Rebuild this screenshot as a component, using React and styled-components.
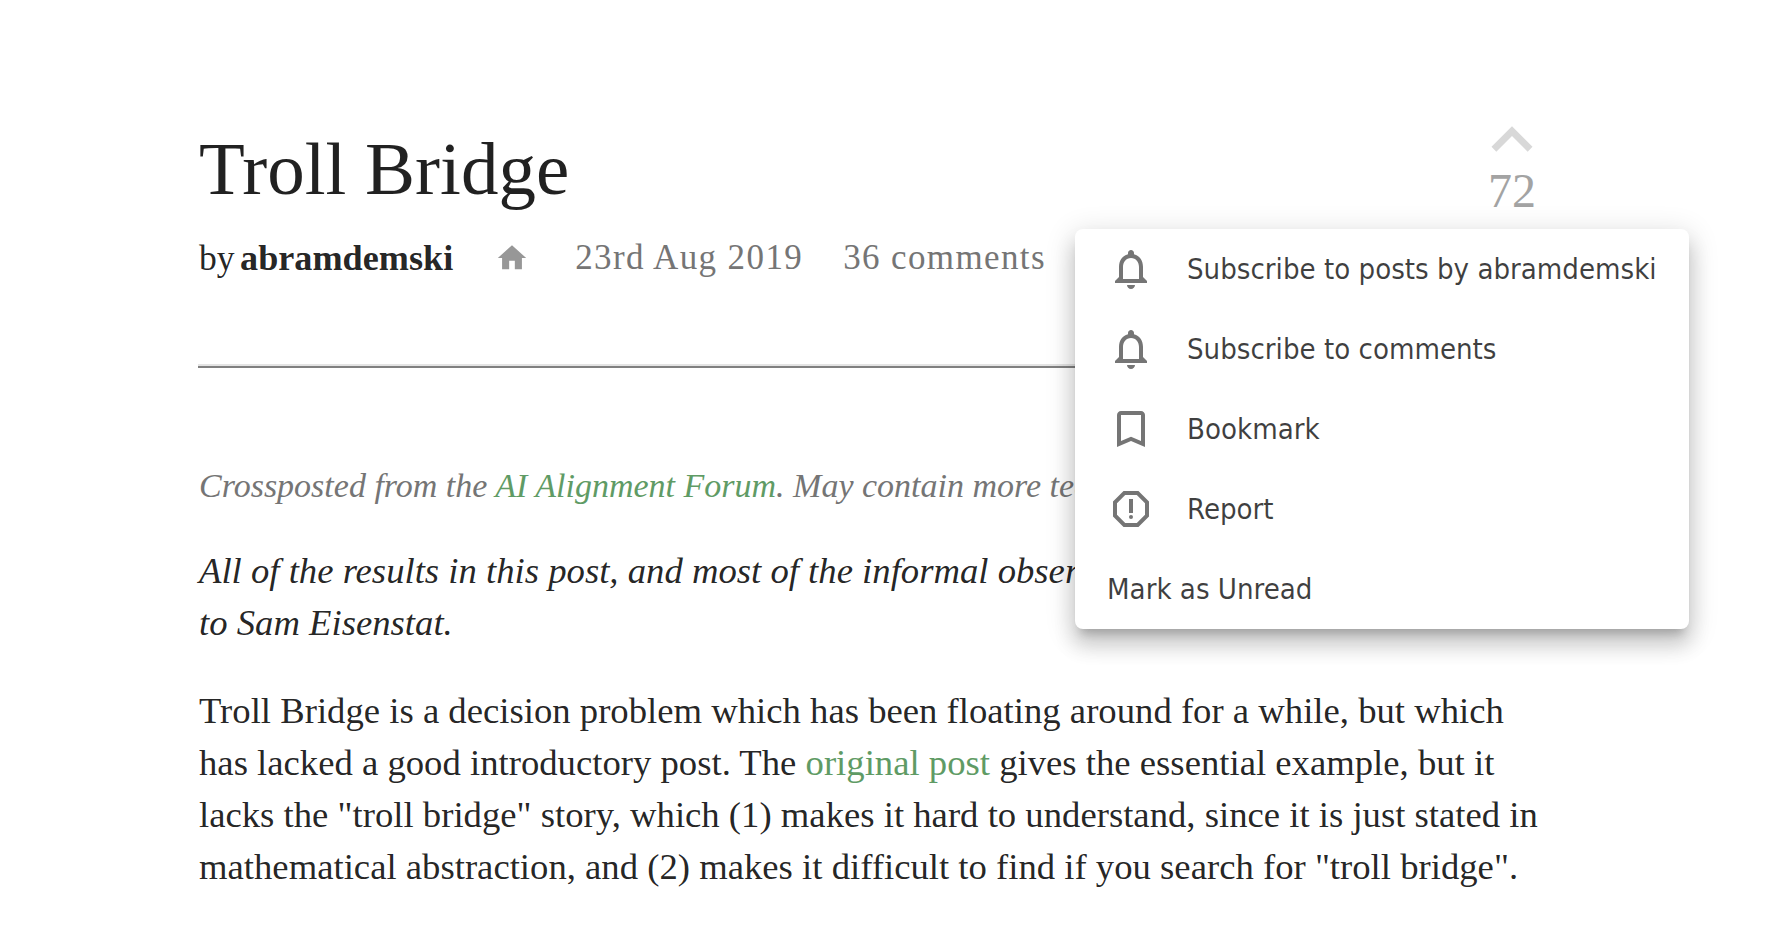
import styled, { createGlobalStyle } from 'styled-components'
import {
	MdNotificationsNone,
	MdBookmarkBorder,
	MdOutlineReport,
	MdHome,
	MdKeyboardArrowUp,
} from 'react-icons/md'

const GlobalStyle = createGlobalStyle`
	html, body {
		margin: 0;
		background: #fff;
	}
`

const colors = {
	text: 'rgba(0, 0, 0, 0.87)',
	faint: '#757575',
	green: '#5f9b65',
	menu: 'rgba(0, 0, 0, 0.75)',
}

const menuItems = [
	{ label: 'Subscribe to posts by abramdemski', icon: MdNotificationsNone },
	{ label: 'Subscribe to comments', icon: MdNotificationsNone },
	{ label: 'Bookmark', icon: MdBookmarkBorder },
	{ label: 'Report', icon: MdOutlineReport },
	{ label: 'Mark as Unread' },
]

export default function App() {
	return (
		<Page>
			<GlobalStyle />
			<Post>
				<Header>
					<Title>Troll Bridge</Title>
					<Vote>
						<MdKeyboardArrowUp size={82} />
						<Score>72</Score>
					</Vote>
				</Header>
				<Byline>
					<Author>
						by <strong>abramdemski</strong>
					</Author>
					<HomeIcon>
						<MdHome size={34} />
					</HomeIcon>
					<Meta>23rd Aug 2019</Meta>
					<Meta>36 comments</Meta>
				</Byline>
				<Rule />
				<Crosspost>
					Crossposted from the <a href="#forum">AI Alignment Forum</a>. May
					contain more technical jargon than usual.
				</Crosspost>
				<Body>
					<em>
						All of the results in this post, and most of the informal observations/interpretations, are due
						<br />
						to Sam Eisenstat.
					</em>
				</Body>
				<Body>
					Troll Bridge is a decision problem which has been floating around for a while, but which
					<br />
					has lacked a good introductory post. The <a href="#post">original post</a> gives the essential example, but it
					<br />
					lacks the "troll bridge" story, which (1) makes it hard to understand, since it is just stated in
					<br />
					mathematical abstraction, and (2) makes it difficult to find if you search for "troll bridge".
				</Body>
			</Post>
			<Menu>
				{menuItems.map(({ label, icon: Icon }) => (
					<MenuItem key={label}>
						{Icon && (
							<MenuIcon>
								<Icon size={48} />
							</MenuIcon>
						)}
						{label}
					</MenuItem>
				))}
			</Menu>
		</Page>
	)
}

const Page = styled.div`
	position: relative;
	height: 934px;
	overflow: hidden;
	padding: 115px 0 0 199px;
	box-sizing: border-box;
	font-family: 'Liberation Serif', serif;
	color: ${colors.text};
`

const Post = styled.article`
	width: 1354px;

	a {
		color: ${colors.green};
		text-decoration: none;
	}
`

const Header = styled.header`
	display: flex;
	justify-content: space-between;
	align-items: flex-start;
`

const Title = styled.h1`
	margin: 0;
	font-size: 75px;
	font-weight: 400;
	line-height: 108px;
	white-space: nowrap;
`

const Vote = styled.div`
	display: flex;
	flex-direction: column;
	align-items: center;
	color: #d8d8d8;

	svg {
		margin: -16px 0 -15px;
	}
`

const Score = styled.span`
	font-size: 48px;
	line-height: 50px;
	color: #a3a3a3;
`

const Byline = styled.div`
	display: flex;
	align-items: center;
	margin-top: 7px;
	height: 56px;
	white-space: nowrap;
`

const Author = styled.span`
	font-size: 35.6px;
	word-spacing: -3.4px;
	margin-right: 42px;

	strong {
		font-size: 36.2px;
		font-weight: 700;
	}
`

const HomeIcon = styled.span`
	display: flex;
	color: #979797;
	margin-right: 46px;
`

const Meta = styled.span`
	font-size: 35px;
	letter-spacing: 1.38px;
	color: ${colors.faint};
	margin-right: 40px;
`

const Rule = styled.hr`
	margin: 78px 0 0 -1px;
	border: 0;
	border-top: 2px solid #e4e4e4;
	height: 2px;
	background: #808080;
`

const Crosspost = styled.p`
	margin: 95px 0 0;
	font-size: 34px;
	line-height: 46px;
	font-style: italic;
	white-space: nowrap;
	color: ${colors.faint};
`

const Body = styled.p`
	margin: 36px 0 0;
	font-size: 36.7px;
	line-height: 52px;
	white-space: nowrap;
`

const Menu = styled.div`
	position: absolute;
	left: 1075px;
	top: 229px;
	width: 614px;
	height: 400px;
	border-radius: 8px;
	background: #fff;
	box-shadow: 0 10px 10px -6px rgba(0, 0, 0, 0.2), 0 16px 20px 2px rgba(0, 0, 0, 0.14),
		0 6px 28px 4px rgba(0, 0, 0, 0.12);
	font-family: 'DejaVu Sans Condensed', 'DejaVu Sans', sans-serif;
	font-size: 29.1px;
	color: ${colors.menu};
`

const MenuItem = styled.div`
	display: flex;
	align-items: center;
	height: 20%;
	padding-left: 32px;
	white-space: nowrap;
`

const MenuIcon = styled.span`
	display: flex;
	color: #757575;
	margin-right: 32px;
`
